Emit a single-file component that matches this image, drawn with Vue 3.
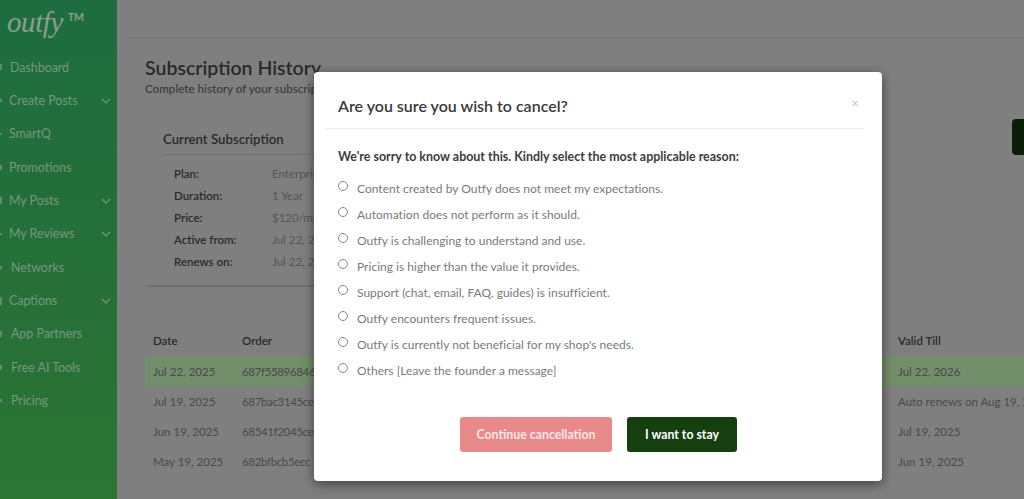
<script setup>
const navItems = [
  { label: 'Dashboard', x: 10, mark: 6 },
  { label: 'Create Posts', x: 9, mark: 3, arrow: true },
  { label: 'SmartQ', x: 9, mark: 2 },
  { label: 'Promotions', x: 9, mark: 5 },
  { label: 'My Posts', x: 9, mark: 7, arrow: true },
  { label: 'My Reviews', x: 9, mark: 2, arrow: true },
  { label: 'Networks', x: 11, mark: 3 },
  { label: 'Captions', x: 9, mark: 8, arrow: true },
  { label: 'App Partners', x: 11, mark: 6 },
  { label: 'Free AI Tools', x: 11, mark: 5 },
  { label: 'Pricing', x: 11, mark: 3 }
]

const details = [
  ['Plan:', 'Enterprise'],
  ['Duration:', '1 Year'],
  ['Price:', '$120/mo'],
  ['Active from:', 'Jul 22, 2025'],
  ['Renews on:', 'Jul 22, 2026']
]

const orders = [
  { date: 'Jul 22, 2025', order: '687f55896846', till: 'Jul 22, 2026', active: true },
  { date: 'Jul 19, 2025', order: '687bac3145ce', till: 'Auto renews on Aug 19, 2025' },
  { date: 'Jun 19, 2025', order: '68541f2045ce', till: 'Jul 19, 2025' },
  { date: 'May 19, 2025', order: '682bfbcb5ecc', till: 'Jun 19, 2025' }
]

const reasons = [
  'Content created by Outfy does not meet my expectations.',
  'Automation does not perform as it should.',
  'Outfy is challenging to understand and use.',
  'Pricing is higher than the value it provides.',
  'Support (chat, email, FAQ, guides) is insufficient.',
  'Outfy encounters frequent issues.',
  "Outfy is currently not beneficial for my shop's needs.",
  'Others [Leave the founder a message]'
]
</script>

<template>
  <div class="page">
    <aside class="sidebar">
      <div class="logo">outfy<sup>TM</sup></div>
      <nav class="nav">
        <div v-for="item in navItems" :key="item.label" class="nav-item">
          <span class="nav-icon" :style="{ height: item.mark + 'px', marginRight: item.x - 2 + 'px' }"></span>
          <span class="nav-label">{{ item.label }}</span>
          <svg v-if="item.arrow" class="chev" width="10" height="6" viewBox="0 0 10 6">
            <path d="M1 1l4 4 4-4" fill="none" stroke="currentColor" stroke-width="1.2" />
          </svg>
        </div>
      </nav>
    </aside>

    <main class="main">
      <div class="topbar"></div>
      <div class="content">
        <h1>Subscription History</h1>
        <p class="sub">Complete history of your subscriptions</p>
        <div class="summary">
          <section class="card">
            <h2>Current Subscription</h2>
            <div v-for="d in details" :key="d[0]" class="detail">
              <b>{{ d[0] }}</b><span>{{ d[1] }}</span>
            </div>
          </section>
          <button class="dark-btn"></button>
        </div>
        <div class="table">
          <div class="row head">
            <span class="c-date">Date</span>
            <span class="c-order">Order</span>
            <span class="c-till">Valid Till</span>
          </div>
          <div v-for="o in orders" :key="o.order" class="row" :class="{ active: o.active }">
            <span class="c-date">{{ o.date }}</span>
            <span class="c-order num">{{ o.order }}</span>
            <span class="c-till">{{ o.till }}</span>
          </div>
        </div>
      </div>
    </main>

    <div class="mask">
      <div class="modal">
        <div class="modal-header">
          <h3>Are you sure you wish to cancel?</h3>
          <span class="close">×</span>
        </div>
        <div class="modal-body">
          <p class="lead">We're sorry to know about this. Kindly select the most applicable reason:</p>
          <label v-for="r in reasons" :key="r" class="reason">
            <span class="radio"></span>
            <span>{{ r }}</span>
          </label>
        </div>
        <div class="modal-footer">
          <button class="btn btn-pink">Continue cancellation</button>
          <button class="btn btn-green">I want to stay</button>
        </div>
      </div>
    </div>
  </div>
</template>

<style>
html, body {
  margin: 0;
  height: 100%;
  overflow: hidden;
}
</style>

<style scoped>
.page {
  display: flex;
  width: 1024px;
  height: 499px;
  overflow: hidden;
  font-family: "Lato", "Open Sans", sans-serif;
  background: #b7b7b7;
  color: #3c3c3c;
}

.sidebar {
  width: 117px;
  flex: none;
  background: linear-gradient(180deg, #2b9c5c 0%, #37a050 60%, #3fa849 100%);
  color: #a8d8b4;
}

.logo {
  height: 50.5px;
  padding: 3px 0 0 7px;
  box-sizing: border-box;
  font: italic 29px/38px "Liberation Serif", serif;
  letter-spacing: -0.4px;
  color: #c4e2cc;
}

.logo sup {
  margin-left: 5px;
  font: 700 10.5px "Lato", sans-serif;
  vertical-align: 11px;
}

.nav-item {
  display: flex;
  align-items: center;
  height: 33.35px;
  padding-right: 6px;
  font-size: 12.4px;
}

.nav-icon {
  width: 2px;
  flex: none;
  background: #c4e2cc;
  opacity: 0.6;
}

.nav-label {
  flex: 1;
}

.chev {
  color: #a8d8b4;
}

.main {
  flex: 1;
  min-width: 0;
}

.topbar {
  height: 37px;
  margin-left: 11px;
  border-bottom: 1px solid #a4a4a4;
}

.content {
  padding: 19px 0 0 28px;
}

h1 {
  margin: 0;
  font-size: 19.5px;
  font-weight: 600;
  line-height: 22px;
}

.sub {
  margin: 3px 0 0;
  font-size: 11.6px;
  line-height: 13px;
  font-weight: 600;
  color: #5a5a5a;
}

.summary {
  display: flex;
  justify-content: space-between;
}

.card {
  width: 500px;
  margin: 22px 0 0 2px;
  padding: 0 16px 13px;
  border-bottom: 2px solid #a0a0a0;
}

h2 {
  margin: 0 0 7px;
  padding: 15px 0 7px;
  font-size: 13.2px;
  line-height: 15px;
  font-weight: 600;
  border-bottom: 1px solid #a0a0a0;
}

.detail {
  display: flex;
  height: 22.1px;
  align-items: center;
  padding-left: 11px;
  font-size: 11.5px;
}

.detail b {
  width: 98px;
  font-weight: 600;
}

.detail span {
  color: #7a7a7a;
}

.dark-btn {
  width: 12px;
  height: 36px;
  margin-top: 24px;
  background: #102c0b;
  border: 0;
  border-radius: 4px 0 0 4px;
}

.table {
  margin-top: 37px;
}

.row {
  display: flex;
  height: 30px;
  align-items: center;
  padding-left: 8px;
  font-size: 11.5px;
  color: #6a6a6a;
}

.row.head {
  height: 32px;
  font-weight: 600;
  color: #3c3c3c;
}

.row.active {
  background: #a4cc98;
}

.row span {
  flex: none;
}

.c-date {
  width: 89px;
}

.c-order {
  width: 656px;
}

.num {
  letter-spacing: -0.35px;
}

.c-till {
  white-space: nowrap;
}

/* lies over the whole page */
.mask {
  position: absolute;
  inset: 0;
  background: rgba(0, 0, 0, 0.3);
}

.modal {
  width: 568px;
  height: 409px;
  margin: 72px 0 0 314px;
  padding: 0 18px 0 24px;
  box-sizing: border-box;
  background: #fff;
  border-radius: 4px;
  box-shadow: 0 3px 12px rgba(0, 0, 0, 0.5);
}

.modal-header {
  display: flex;
  justify-content: space-between;
  height: 56px;
  margin-left: -13px;
  padding-left: 13px;
  border-bottom: 1px solid #eee;
}

h3 {
  margin: 0;
  padding-top: 24px;
  font-size: 16px;
  font-weight: 600;
  line-height: 20px;
  color: #3a3a3a;
}

.close {
  padding: 22px 5px 0 0;
  font-size: 14px;
  line-height: 18px;
  color: #c8c8c8;
}

.modal-body {
  padding-top: 20px;
}

.lead {
  margin: 0 0 10px;
  font-size: 12.45px;
  font-weight: 700;
  line-height: 16px;
  color: #3c3c3c;
}

.reason {
  display: flex;
  align-items: center;
  gap: 9px;
  height: 26px;
  font-size: 12px;
  letter-spacing: 0.02px;
  color: #7a7a7a;
}

.radio {
  width: 8px;
  height: 8px;
  margin-top: -4px;
  border: 1px solid #888;
  border-radius: 50%;
}

.modal-footer {
  display: flex;
  gap: 15px;
  margin-top: 34px;
  padding-left: 122px;
}

.btn {
  height: 35px;
  padding: 0;
  border: 0;
  border-radius: 3px;
  font: 700 12.3px "Lato", sans-serif;
  color: #fff;
}

.btn-pink {
  width: 152px;
  background: #e88a8a;
  color: #fbe6e6;
}

.btn-green {
  width: 110px;
  background: #153f0e;
}
</style>
